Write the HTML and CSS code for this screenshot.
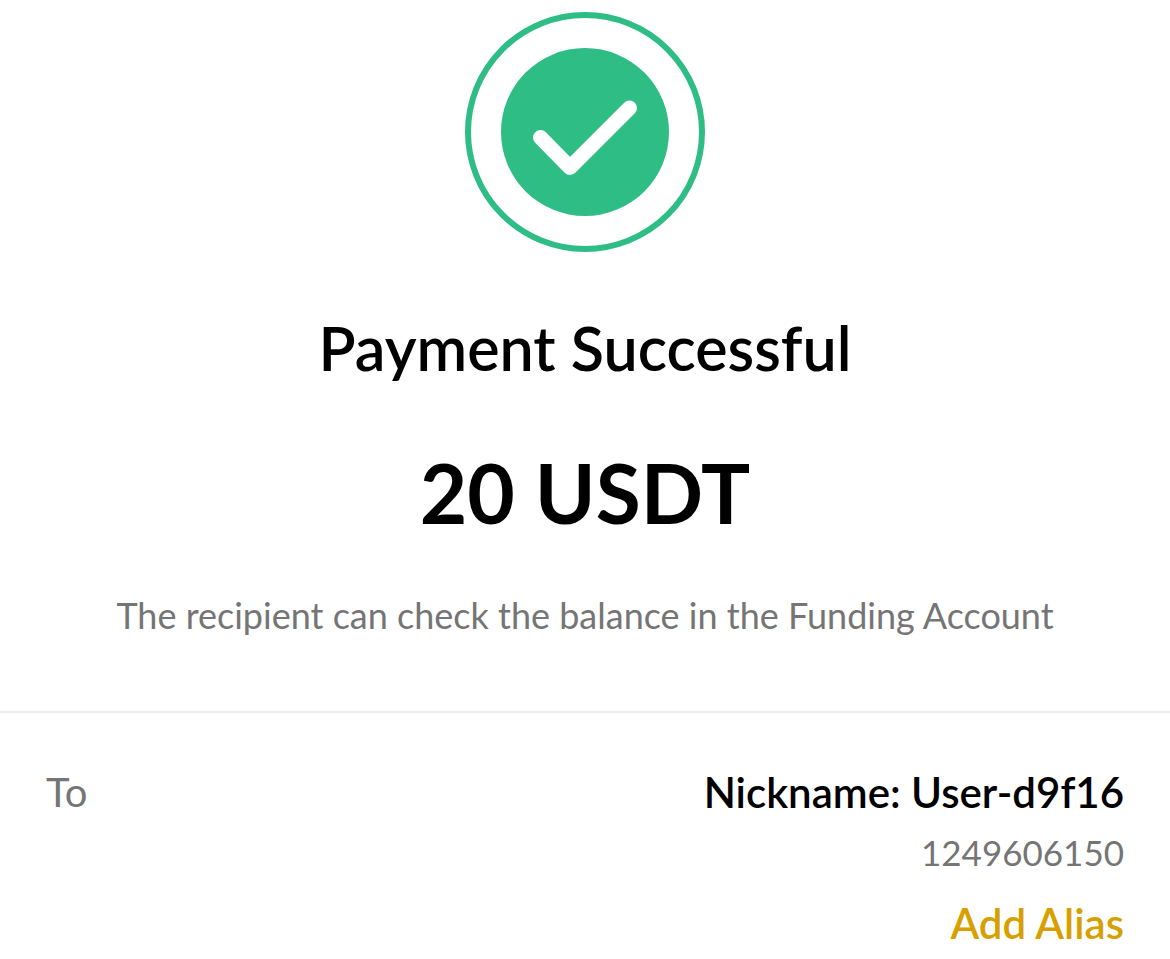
FILE: index.html
```html
<!DOCTYPE html>
<html lang="en">

<head>
    <meta charset="UTF-8">
    <meta name="viewport" content="width=device-width, initial-scale=1.0">
    <title>Payment Successful</title>
    <link rel="stylesheet" href="styles.css">
</head>

<body>
    <main>
        <section class="summary">
            <svg class="check" viewBox="0 0 240 240" aria-hidden="true">
                <circle class="ring" cx="120" cy="120" r="117" />
                <circle class="disc" cx="120" cy="120" r="84" />
                <path class="tick" d="M75.500 125.500L105 155.500L164.500 96" />
            </svg>
            <h1 class="title">Payment Successful</h1>
            <p class="amount">20 USDT</p>
            <p class="note">The recipient can check the balance in the Funding Account</p>
        </section>

        <section class="recipient">
            <span class="label">To</span>
            <div class="details">
                <strong class="nickname">Nickname: User-d9f16</strong>
                <span class="account-id">1249606150</span>
                <a class="alias" href="#">Add Alias</a>
            </div>
        </section>
    </main>
</body>

</html>
```

FILE: styles.css
```css
body {
    margin: 0;
    font-family: Lato, "Open Sans", sans-serif;
    background-color: #ffffff;
    color: #000000;
}

.summary {
    display: flex;
    flex-direction: column;
    align-items: center;
    padding: 12px 44px 74px;
    text-align: center;
    border-bottom: 2px solid #ededed;
}

.check {
    width: 240px;
    height: 240px;
}

.ring {
    fill: none;
    stroke: #2ebd85;
    stroke-width: 6;
}

.disc {
    fill: #2ebd85;
}

.tick {
    fill: none;
    stroke: #ffffff;
    stroke-width: 15;
    stroke-linecap: round;
    stroke-linejoin: round;
}

.title {
    margin: 60px 0 0;
    font-size: 61px;
    line-height: 72px;
    font-weight: 600;
}

.amount {
    margin: 60px 0 0;
    font-size: 82px;
    line-height: 96px;
    font-weight: 700;
}

.note {
    margin: 53px 0 0;
    font-size: 36px;
    line-height: 44px;
    color: #757575;
}

.recipient {
    display: flex;
    justify-content: space-between;
    padding: 55px 46px 0;
}

.details {
    display: flex;
    flex-direction: column;
    align-items: flex-end;
}

.label,
.nickname,
.alias {
    font-size: 42px;
    line-height: 48px;
}

.label {
    font-size: 40px;
    color: #757575;
}

.nickname,
.alias {
    font-weight: 600;
}

.account-id {
    margin: 14px 0 25px;
    font-size: 35px;
    line-height: 44px;
    color: #757575;
}

.alias {
    color: #d89f00;
    text-decoration: none;
}
```
